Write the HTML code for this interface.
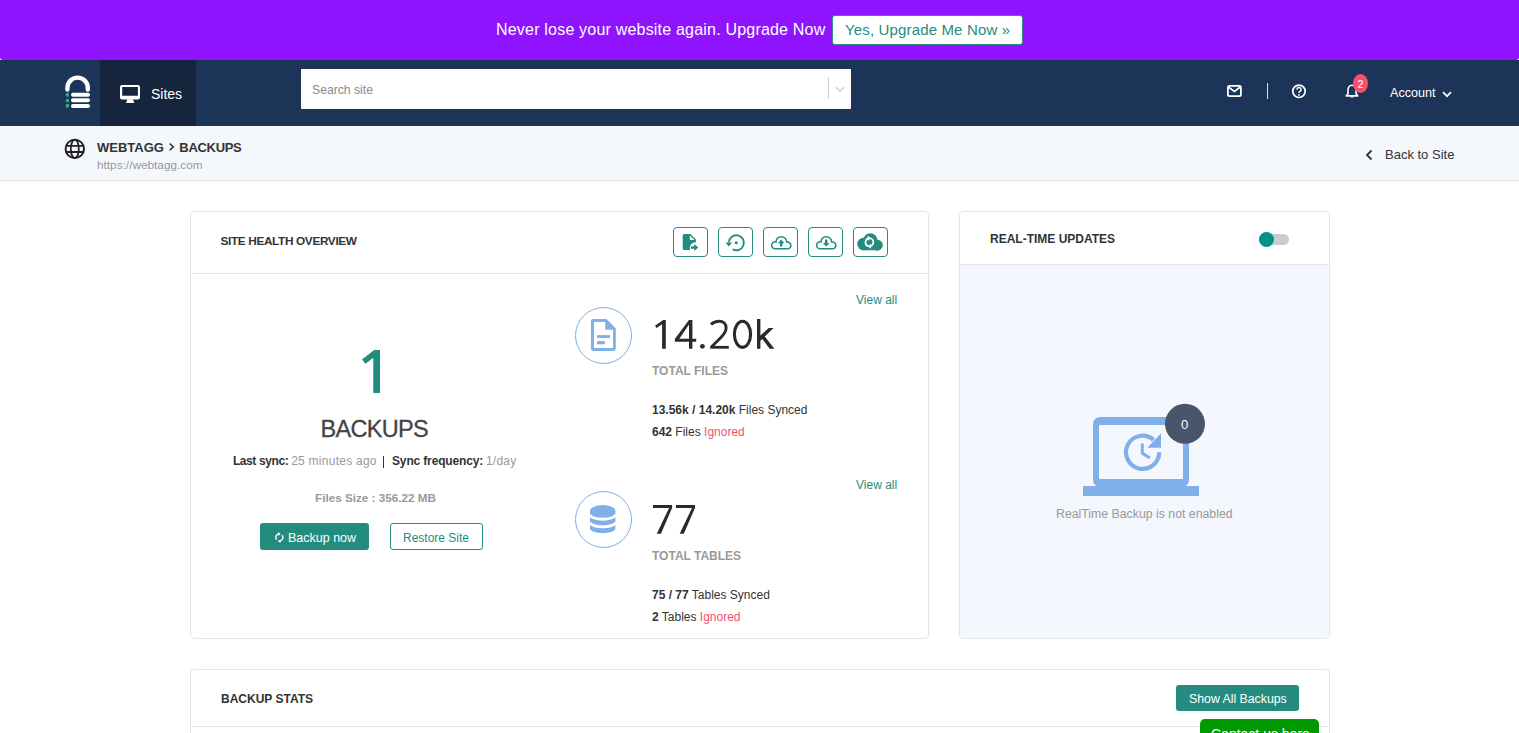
<!DOCTYPE html>
<html><head><meta charset="utf-8">
<style>
*{box-sizing:border-box;margin:0;padding:0}
html,body{width:1519px;height:733px;overflow:hidden;background:#fff;font-family:"Liberation Sans",sans-serif;color:#333}
.abs{position:absolute}
.banner{position:absolute;left:0;top:0;width:1519px;height:60px;background:#9013fe;border-radius:0 0 3px 3px}
.banner .txt{position:absolute;left:496px;top:21px;font-size:16px;letter-spacing:0.2px;color:#fff;white-space:nowrap}
.banner .btn{position:absolute;left:832px;top:15px;width:191px;height:30px;background:#fff;border:1px solid #2b8f84;border-radius:3px;color:#238c7f;font-size:15px;letter-spacing:0.15px;white-space:nowrap;padding-left:12px;line-height:28px}
.nav{position:absolute;left:0;top:60px;width:1519px;height:66px;background:#1c3457}
.sites{position:absolute;left:100px;top:0;width:96px;height:66px;background:#16253e}
.search{position:absolute;left:301px;top:9px;width:550px;height:40px;background:#fff;border-radius:1px}
.bc{position:absolute;left:0;top:126px;width:1519px;height:55px;background:#f4f7fc;border-bottom:1px solid #dcdfe3}
.card{position:absolute;background:#fff;border:1px solid #e6e6e6;border-radius:4px}
.t{position:absolute;white-space:nowrap}
.ib{width:35px;height:30px;border:1px solid #238c7f;border-radius:4px}
.ib svg{position:absolute;left:-1px;top:-1px}
</style></head><body>
<div class="banner">
  <div class="txt">Never lose your website again. Upgrade Now</div>
  <div class="btn">Yes, Upgrade Me Now »</div>
</div>
<div class="nav">
  <svg class="abs" style="left:60px;top:12px" width="36" height="40" viewBox="60 72 36 40">
    <path d="M67.4 89.5 V87.8 A10.2 10.2 0 0 1 87.8 87.8 V89.5" fill="none" stroke="#fff" stroke-width="4.4" stroke-linecap="round"/>
    <rect x="71" y="92.7" width="19" height="4.1" rx="2" fill="#fff"/>
    <rect x="71" y="98.2" width="19" height="4.1" rx="2" fill="#fff"/>
    <rect x="71" y="103.9" width="19" height="4.1" rx="2" fill="#fff"/>
    <path d="M65.3 94.5 L67 92.7 L69 93.5 L69 96.5 L66.5 96.8 Z" fill="#2aa98a"/>
    <path d="M65.8 100 L67.5 98.3 L69 99.5 L69 102.3 L65.8 102.3 Z" fill="#2aa98a"/>
    <path d="M65.8 104 L69 104 L69 107.3 L65.8 108 Z" fill="#2aa98a"/>
  </svg>
  <div class="sites">
    <svg class="abs" style="left:20px;top:25px" width="20" height="18" viewBox="120 85 20 18">
      <path d="M122 85 H138 A2 2 0 0 1 140 87 V97.5 A2 2 0 0 1 138 99.5 H122 A2 2 0 0 1 120 97.5 V87 A2 2 0 0 1 122 85 Z M122.2 87.1 V95.7 H137.9 V87.1 Z" fill="#fff" fill-rule="evenodd"/>
      <path d="M127.3 99.3 H133 L134.3 103 H126 Z" fill="#fff"/>
    </svg>
    <div class="t" style="left:51px;top:26px;font-size:14px;color:#fff">Sites</div>
  </div>
  <div class="search">
    <div class="t" style="left:11px;top:14px;font-size:12.2px;color:#8a8a8a">Search site</div>
    <div class="abs" style="left:527px;top:8px;width:1px;height:22px;background:#ccc"></div>
    <svg class="abs" style="left:534px;top:16px" width="10" height="8" viewBox="0 0 10 8"><path d="M1 2 L5 6 L9 2" fill="none" stroke="#ccc" stroke-width="1.4"/></svg>
  </div>
  <svg class="abs" style="left:1227px;top:25px" width="15" height="12" viewBox="0 0 15 12">
    <rect x="0.9" y="0.9" width="13" height="10.2" rx="1.6" fill="none" stroke="#fff" stroke-width="1.8"/>
    <path d="M1.5 2 L7.4 6.4 L13.3 2" fill="none" stroke="#fff" stroke-width="1.6"/>
  </svg>
  <div class="abs" style="left:1267px;top:23px;width:1px;height:16px;background:#ddd"></div>
  <svg class="abs" style="left:1291px;top:24px" width="16" height="15" viewBox="0 0 16 15">
    <circle cx="8" cy="7.3" r="6.2" fill="none" stroke="#fff" stroke-width="1.7"/>
    <path d="M5.9 5.6 A2.1 2.1 0 1 1 8.9 7.4 C8.1 7.9 8 8.2 8 9" fill="none" stroke="#fff" stroke-width="1.5"/>
    <circle cx="8" cy="10.9" r="0.9" fill="#fff"/>
  </svg>
  <svg class="abs" style="left:1345px;top:23px" width="14" height="16" viewBox="0 0 14 16">
    <path d="M7 2.3 C4.3 2.3 3 4.6 3 7 V10.6 L1.2 12.9 H12.8 L11 10.6 V7 C11 4.6 9.7 2.3 7 2.3 Z" fill="none" stroke="#fff" stroke-width="1.6" stroke-linejoin="round"/>
    <path d="M5.3 13.6 A1.8 1.8 0 0 0 8.7 13.6 Z" fill="#fff"/>
  </svg>
  <div class="abs" style="left:1353px;top:14px;width:15px;height:19px;border-radius:50%;background:#f4516c"></div>
  <div class="t" style="left:1357.5px;top:18px;font-size:10.5px;color:#fff">2</div>
  <div class="t" style="left:1390px;top:26px;font-size:12.6px;color:#fff">Account</div>
  <svg class="abs" style="left:1442px;top:31px" width="10" height="7" viewBox="0 0 10 7"><path d="M1 1.2 L5 5.2 L9 1.2" fill="none" stroke="#fff" stroke-width="1.7"/></svg>
</div>
<div class="bc">
  <svg class="abs" style="left:64px;top:12px" width="22" height="22" viewBox="0 0 22 22">
    <circle cx="10.8" cy="10.9" r="9.2" fill="none" stroke="#222" stroke-width="2"/>
    <ellipse cx="10.8" cy="10.9" rx="4" ry="9.2" fill="none" stroke="#222" stroke-width="1.8"/>
    <path d="M2 7.8 H19.6 M2 14 H19.6" stroke="#222" stroke-width="1.8"/>
  </svg>
  <div class="t" style="left:97px;top:14px;font-size:13px;font-weight:bold;color:#333">WEBTAGG</div>
  <svg class="abs" style="left:168px;top:16px" width="8" height="10" viewBox="0 0 8 10"><path d="M1.7 1.6 L5.3 4.9 L1.7 8.2" fill="none" stroke="#333" stroke-width="1.5"/></svg>
  <div class="t" style="left:179.3px;top:14px;font-size:13px;font-weight:bold;letter-spacing:-0.3px;color:#333">BACKUPS</div>
  <div class="t" style="left:97px;top:32px;font-size:11.8px;color:#999">https://webtagg.com</div>
  <svg class="abs" style="left:1365px;top:23px" width="9" height="12" viewBox="0 0 9 12"><path d="M6.5 1.5 L2 6 L6.5 10.5" fill="none" stroke="#333" stroke-width="1.8"/></svg>
  <div class="t" style="left:1385px;top:21px;font-size:13px;color:#333">Back to Site</div>
</div>
<div class="card" style="left:190px;top:211px;width:739px;height:428px">
  <div class="t" style="left:29.5px;top:22px;font-size:11.8px;font-weight:bold;letter-spacing:-0.35px;color:#333">SITE HEALTH OVERVIEW</div>
  <div class="abs" style="left:0;top:61px;width:737px;height:1px;background:#e6e6e6"></div>
  <div class="abs ib" style="left:482px;top:15px"><svg width="35" height="30" viewBox="673 227 35 30"><path d="M684.3 234 H690.5 L695.9 239.4 V242.4 A5.5 5.5 0 0 0 690.3 250.1 H684.3 A1.6 1.6 0 0 1 682.7 248.5 V235.6 A1.6 1.6 0 0 1 684.3 234 Z M689.9 235.4 V239.9 H694.4 Z" fill="#238c7f" fill-rule="evenodd"/><path d="M691 246.3 H694.3 V244.1 L698.3 247.5 L694.3 251 V248.7 H691 Z" fill="#238c7f"/></svg></div>
  <div class="abs ib" style="left:527px;top:15px"><svg width="35" height="30" viewBox="718 227 35 30"><path d="M728.9 242.2 A7.5 7.5 0 1 1 732.6 249.2" fill="none" stroke="#238c7f" stroke-width="1.9"/><path d="M725.4 242.4 H732.2 L728.8 246.4 Z" fill="#238c7f"/><circle cx="736.3" cy="242.7" r="1.5" fill="#238c7f"/></svg></div>
  <div class="abs ib" style="left:572px;top:15px"><svg width="35" height="30" viewBox="763 227 35 30"><g transform="translate(0,0)"><path d="M775.00 248.83 A3.52 3.52 0 1 1 775.98 241.91 A5.32 5.32 0 1 1 786.62 242.07 A3.43 3.43 0 1 1 787.40 248.83 Z" fill="none" stroke="#238c7f" stroke-width="1.55"/><path d="M781.2 239.6 L777.9 243.3 H780 V246.6 H782.4 V243.3 H784.5 Z" fill="#238c7f"/></g></svg></div>
  <div class="abs ib" style="left:617px;top:15px"><svg width="35" height="30" viewBox="808 227 35 30"><g transform="translate(45,0)"><path d="M775.00 248.83 A3.52 3.52 0 1 1 775.98 241.91 A5.32 5.32 0 1 1 786.62 242.07 A3.43 3.43 0 1 1 787.40 248.83 Z" fill="none" stroke="#238c7f" stroke-width="1.55"/><path d="M781.2 246.6 L777.9 242.9 H780 V239.6 H782.4 V242.9 H784.5 Z" fill="#238c7f"/></g></svg></div>
  <div class="abs ib" style="left:662px;top:15px"><svg width="35" height="30" viewBox="853 227 35 30"><g fill="#238c7f"><circle cx="863.6" cy="244" r="6.3"/><circle cx="870.3" cy="240.5" r="7.2"/><circle cx="877.3" cy="245.2" r="5.5"/><rect x="863" y="244" width="14" height="6.3" rx="1"/></g>
<path d="M868.2 238.4 A4.1 4.1 0 0 0 868.4 246.2 M870.6 246.1 A4.1 4.1 0 0 0 870.4 238.3" fill="none" stroke="#fff" stroke-width="1.7"/>
<path d="M867.6 235.8 L871.3 238.3 L867.8 240.8 Z M871.2 243.7 L867.5 246.2 L871 248.7 Z" fill="#fff"/></svg></div>

  <svg class="abs" style="left:159px;top:126px" width="30" height="56" viewBox="350 338 30 56"><path d="M374.2 350 H380.4 V392.9 H373.3 V357.8 L365.5 363.8 L362 359.5 Z" fill="#228c7e"/></svg>
  <div class="t" style="left:129.5px;top:204px;font-size:23.5px;letter-spacing:-0.7px;color:#444;-webkit-text-stroke:0.3px #444">BACKUPS</div>
  <div class="t" style="left:41.9px;top:242px;font-size:12px;font-weight:bold;letter-spacing:-0.4px;color:#333">Last sync:</div>
  <div class="t" style="left:100.2px;top:242px;font-size:12px;letter-spacing:0.25px;color:#999">25 minutes ago</div>
  <div class="abs" style="left:192px;top:244px;width:1.2px;height:12px;background:#333"></div>
  <div class="t" style="left:201px;top:242px;font-size:12px;font-weight:bold;letter-spacing:-0.15px;color:#333">Sync frequency:</div>
  <div class="t" style="left:294.9px;top:242px;font-size:12px;letter-spacing:0.25px;color:#999">1/day</div>
  <div class="t" style="left:124px;top:279px;font-size:11.7px;font-weight:bold;color:#999">Files Size : 356.22 MB</div>
  <div class="abs" style="left:69px;top:311px;width:109px;height:27px;background:#238c7f;border-radius:3px"></div>
  <svg class="abs" style="left:83px;top:320px" width="10" height="12" viewBox="0 0 10 12"><path d="M5.1 1.9 A3.6 3.6 0 0 0 2.6 7.8 M8 3.2 A3.6 3.6 0 0 1 5.7 9.1" fill="none" stroke="#fff" stroke-width="1.35"/><path d="M4.2 0 L6.8 1.9 L4.2 3.7 Z M6.5 7.4 L3.9 9.2 L6.5 11 Z" fill="#fff"/></svg>
  <div class="t" style="left:97px;top:319px;font-size:12.5px;color:#fff">Backup now</div>
  <div class="abs" style="left:199px;top:311px;width:93px;height:27px;border:1px solid #238c7f;border-radius:3px"></div>
  <div class="t" style="left:212px;top:319px;font-size:12px;color:#238c7f">Restore Site</div>

  <div class="t" style="left:665px;top:81px;font-size:12px;color:#238c7f">View all</div>
  <div class="abs" style="left:384px;top:95px;width:57px;height:57px;border:1px solid #7fb0ea;border-radius:50%"></div>
  <svg class="abs" style="left:398px;top:105px" width="30" height="36" viewBox="589 317 30 36"><path d="M593.6 318.9 H606.6 L615.8 328.4 V348.2 A2.7 2.7 0 0 1 613.1 350.9 H593.6 A2.7 2.7 0 0 1 590.9 348.2 V321.6 A2.7 2.7 0 0 1 593.6 318.9 Z M594 321.9 V347.9 H613 V329.8 H605.2 V321.9 Z" fill="#7fb0ea" fill-rule="evenodd"/><rect x="597" y="335.1" width="13" height="2.9" fill="#7fb0ea"/><rect x="597" y="341.1" width="7.9" height="3.2" fill="#7fb0ea"/></svg>
  <svg class="abs" style="left:459px;top:104px" width="130" height="36" viewBox="650 316 130 36">
  <path d="M663.2 320 H665.8 V348.7 H662.1 V324.2 L656.5 328.1 L655 325.8 Z" fill="#2a2a2a"/>
  <path d="M689 320 H692.4 V338.8 H696.2 V341.8 H692.4 V348.7 H689 V341.8 H674.8 V338.9 Z M689 324.4 L679.3 338.8 H689 Z" fill="#2a2a2a" fill-rule="evenodd"/>
  <circle cx="702.4" cy="346.3" r="2.4" fill="#2a2a2a"/>
  <path d="M711 324.5 C713.4 322.2 716 321.3 719 321.3 C723.6 321.3 726.1 324 726.1 328 C726.1 331.6 724.2 334.2 720.4 338 L711.6 346.8" fill="none" stroke="#2a2a2a" stroke-width="2.9"/>
  <rect x="710.2" y="345.9" width="18.6" height="2.8" fill="#2a2a2a"/>
  <ellipse cx="742.5" cy="334.3" rx="8.1" ry="13.05" fill="none" stroke="#2a2a2a" stroke-width="3.1"/>
  <path d="M757 319.1 H760.4 V335.6 L768.6 328.1 H773.6 L764.8 336.4 L774.4 348.7 H769.6 L762.3 339.1 L760.4 340.8 V348.7 H757 Z" fill="#2a2a2a"/>
</svg>
  <div class="t" style="left:461px;top:152px;font-size:12px;font-weight:bold;color:#999">TOTAL FILES</div>
  <div class="t" style="left:461px;top:191px;font-size:12px;color:#333"><b>13.56k / 14.20k</b> Files Synced</div>
  <div class="t" style="left:461px;top:213px;font-size:12px;color:#333"><b>642</b> Files <span style="color:#f4516c">Ignored</span></div>

  <div class="t" style="left:665px;top:266px;font-size:12px;color:#238c7f">View all</div>
  <div class="abs" style="left:384px;top:279px;width:57px;height:57px;border:1px solid #7fb0ea;border-radius:50%"></div>
  <svg class="abs" style="left:398px;top:291px" width="28" height="32" viewBox="589 503 28 32"><path d="M590 511.2 A12.7 6.2 0 0 1 615.4 511.2 V528.2 A12.7 5 0 0 1 590 528.2 Z" fill="#7fb0ea"/><path d="M589.6 514.2 A13.1 5 0 0 0 615.8 514.2 M589.6 521.9 A13.1 5 0 0 0 615.8 521.9" fill="none" stroke="#fff" stroke-width="2.9"/></svg>
  <svg class="abs" style="left:459px;top:289px" width="50" height="36" viewBox="650 501 50 36">
  <path d="M653 505 H672.1 V507.9 L660.9 533.8 H656.8 L669.1 507.9 H653 Z M675.9 505 H695 V507.9 L683.8 533.8 H679.7 L692 507.9 H675.9 Z" fill="#2a2a2a"/>
</svg>
  <div class="t" style="left:461px;top:337px;font-size:12px;font-weight:bold;color:#999">TOTAL TABLES</div>
  <div class="t" style="left:461px;top:376px;font-size:12px;color:#333"><b>75 / 77</b> Tables Synced</div>
  <div class="t" style="left:461px;top:398px;font-size:12px;color:#333"><b>2</b> Tables <span style="color:#f4516c">Ignored</span></div>
</div>
<div class="card" style="left:959px;top:211px;width:371px;height:428px;overflow:hidden">
  <div class="t" style="left:30px;top:20px;font-size:12px;font-weight:bold;color:#333">REAL-TIME UPDATES</div>
  <div class="abs" style="left:299px;top:22px;width:30px;height:11px;border-radius:6px;background:#ccc"></div>
  <div class="abs" style="left:299px;top:20px;width:15px;height:15px;border-radius:50%;background:#009485"></div>
  <div class="abs" style="left:0;top:52px;width:369px;height:375px;background:#f4f7fd;border-top:1px solid #e6e6e6"></div>
  <svg class="abs" style="left:122px;top:189px" width="130" height="96" viewBox="1082 401 130 96">
    <path d="M1100 417 H1182 A7 7 0 0 1 1189 424 V480 A7 7 0 0 1 1182 487 H1100 A7 7 0 0 1 1093 480 V424 A7 7 0 0 1 1100 417 Z M1099 425 V479 H1183 V425 Z" fill="#7fb0ea" fill-rule="evenodd"/>
    <rect x="1083" y="486" width="116" height="10" fill="#7fb0ea"/>
    <path d="M1159.2 452.3 A16.6 16.6 0 1 1 1153.5 439.8" fill="none" stroke="#7fb0ea" stroke-width="4.2"/>
    <path d="M1161 433.3 V447.8 H1147.3 Z" fill="#7fb0ea"/>
    <path d="M1142.3 443.4 V453.4 L1150 458" fill="none" stroke="#7fb0ea" stroke-width="3"/>
    <circle cx="1185" cy="423.8" r="20" fill="#48556b"/>
  </svg>
  <div class="t" style="left:221px;top:205px;font-size:13px;color:#fff">0</div>
  <div class="t" style="left:96px;top:295px;font-size:12.3px;color:#999">RealTime Backup is not enabled</div>
</div>
<div class="card" style="left:190px;top:669px;width:1140px;height:100px">
  <div class="t" style="left:30px;top:22px;font-size:12px;font-weight:bold;color:#333">BACKUP STATS</div>
  <div class="abs" style="left:0;top:56px;width:1138px;height:1px;background:#e6e6e6"></div>
  <div class="abs" style="left:985px;top:15px;width:123px;height:26px;background:#238c7f;border-radius:3px"></div>
  <div class="t" style="left:998px;top:22px;font-size:12.3px;color:#fff">Show All Backups</div>
</div>
<div class="abs" style="left:1200px;top:719px;width:119px;height:30px;background:#009900;border-radius:5px"></div>
<div class="t" style="left:1211px;top:726px;font-size:14px;color:#fff">Contact us here</div>
</body></html>
